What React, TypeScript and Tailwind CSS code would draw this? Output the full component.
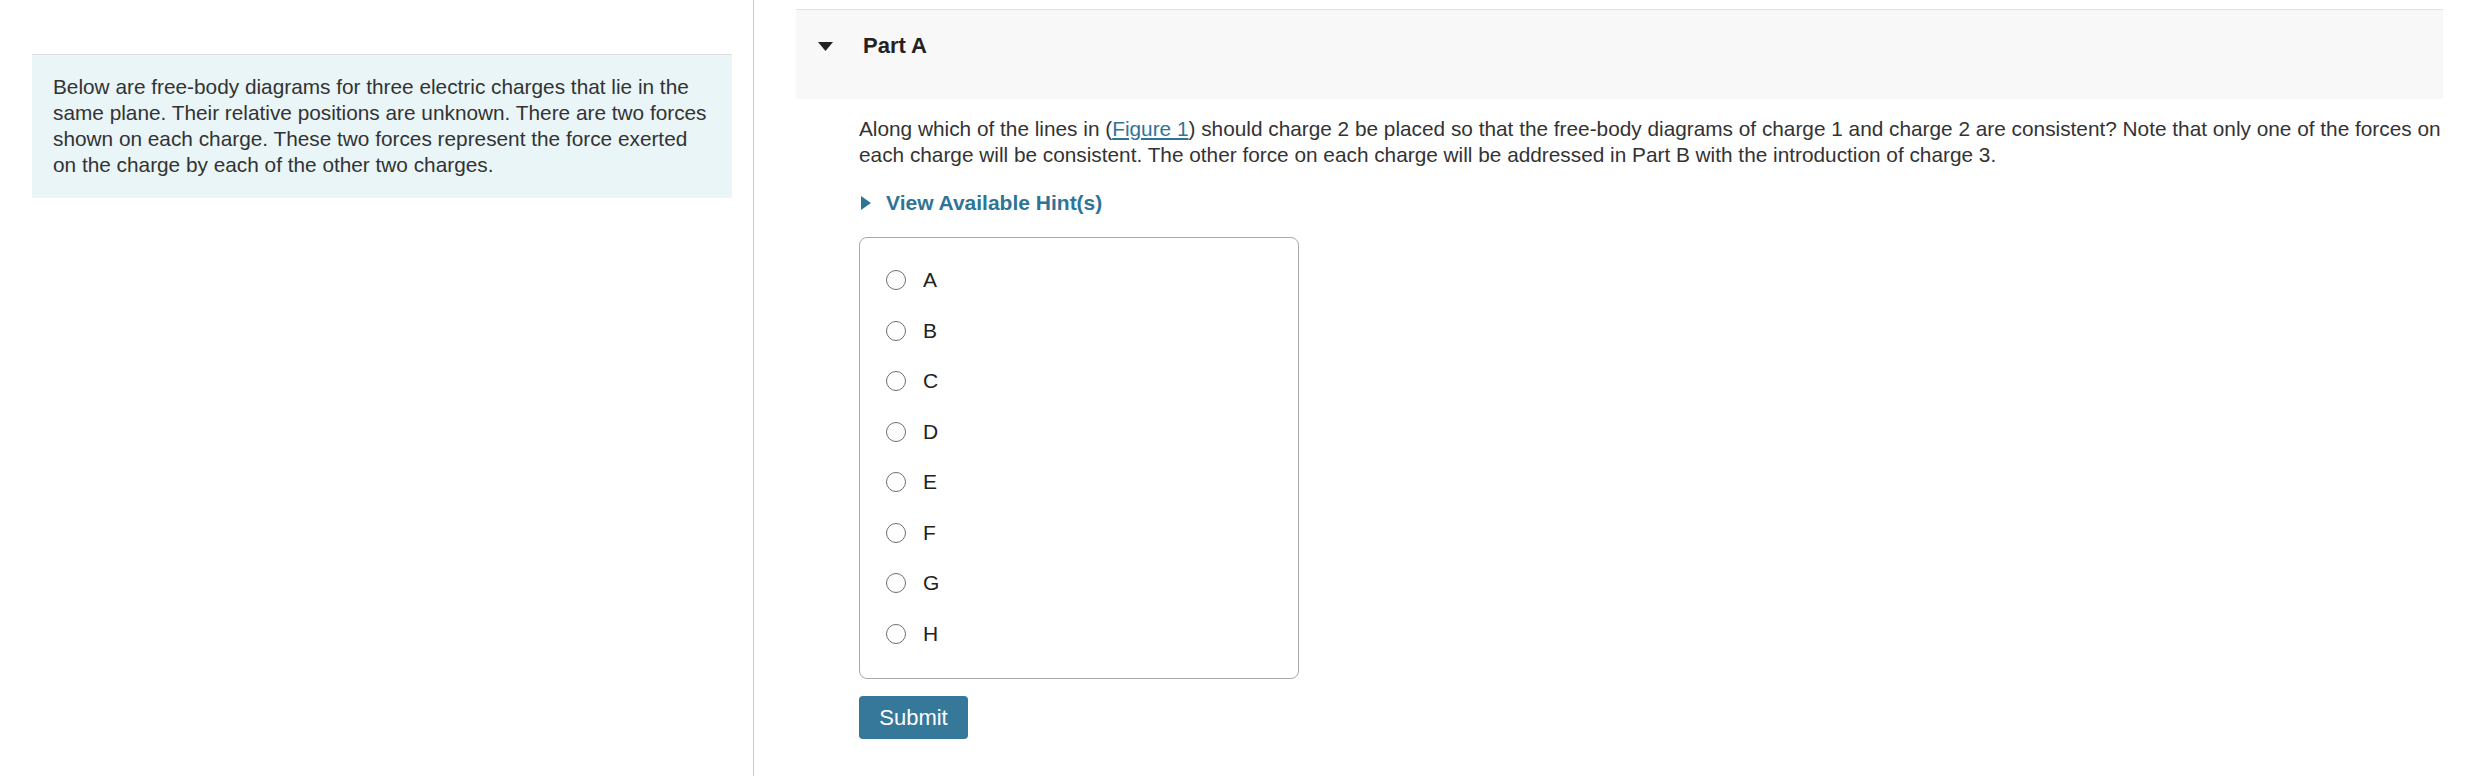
const font = { fontFamily: '"Liberation Sans", Arial, Helvetica, sans-serif' };

const options = ["A", "B", "C", "D", "E", "F", "G", "H"];

export default function App() {
  return (
    <div className="flex min-h-screen bg-white text-[#333]" style={font}>
      {/* Intro column */}
      <div className="w-[754px] shrink-0 border-r border-[#c6ccd4]">
        <div className="ml-[32px] mt-[54px] w-[700px] border-t border-[#dcdfe0] bg-[#e9f5f7] pb-[20px] pl-[21px] pr-[20px] pt-[19px] text-[20.8px] leading-[26px]">
          Below are free-body diagrams for three electric charges that lie in the same plane. Their relative
          positions are unknown. There are two forces shown on each charge. These two forces represent the force
          exerted on the charge by each of the other two charges.
        </div>
      </div>

      {/* Part column */}
      <div className="flex-1 pl-[42px] pr-[43px]">
        <div className="mt-[9px] flex items-center border-t border-[#e2e2e2] bg-[#f8f8f8] pb-[40px] pl-[22px] pt-[23px]">
          <svg width="15" height="9" viewBox="0 0 15 9" className="mr-[30px]">
            <path d="M0 0 H15 L7.5 9 Z" fill="#222" />
          </svg>
          <h2 className="text-[22px] font-bold leading-[26px] text-[#222]">Part A</h2>
        </div>

        <div className="-mr-5 pl-[63px]">
          <p className="mt-[17px] text-[20.8px] leading-[26px]">
            Along which of the lines in (
            <a href="#" className="text-[#2f7497] underline underline-offset-2">
              Figure 1
            </a>
            ) should charge 2 be placed so that the free-body diagrams of charge 1 and charge 2 are consistent? Note
            that only one of the forces on each charge will be consistent. The other force on each charge will be
            addressed in Part B with the introduction of charge 3.
          </p>

          <button className="mt-[22px] flex items-center text-[21px] font-bold leading-[26px] text-[#2f7497]">
            <svg width="10" height="14" viewBox="0 0 10 14" className="ml-[2px] mr-[15px]">
              <path d="M0 0 L10 7 L0 14 Z" fill="#2f7497" />
            </svg>
            View Available Hint(s)
          </button>

          <div className="mt-[21px] w-[440px] rounded-[8px] border border-[#a9a9a9] pb-[19px] pl-[26px] pt-[17px]">
            {options.map((o) => (
              <label key={o} className="flex h-[50.5px] items-center text-[21px] leading-[26px] text-[#222]">
                <span className="h-[20px] w-[20px] rounded-full border-[1.5px] border-[#6f6f6f] bg-white" />
                <span className="ml-[17px]">{o}</span>
              </label>
            ))}
          </div>

          <button className="mt-[17px] h-[43px] w-[109px] rounded-[4px] bg-[#367899] text-[22px] leading-[26px] text-white">
            Submit
          </button>
        </div>
      </div>
    </div>
  );
}
